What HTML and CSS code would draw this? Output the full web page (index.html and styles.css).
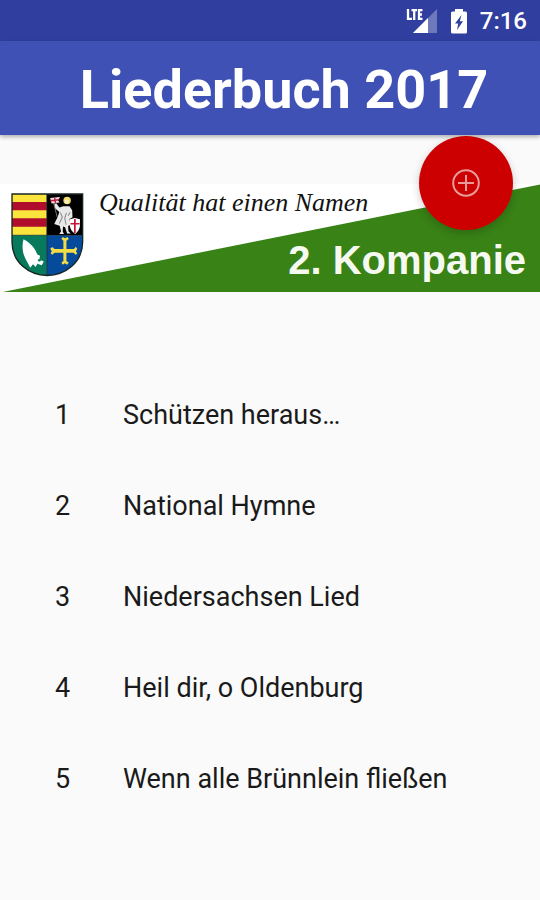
FILE: index.html
```html
<!DOCTYPE html>
<html lang="de">
    <head>
        <meta charset="utf-8">
        <title>Liederbuch 2017</title>
        <meta name="viewport" content="width=device-width, initial-scale=1.0">
        <link rel="stylesheet" href="styles.css">
    </head>
    <body>
        <div class="statusbar">
            <svg class="signal" viewBox="0 0 32 26" role="img" aria-label="LTE">
                <path d="M31 1V25H7z" fill="#fff" fill-opacity=".3"/>
                <path d="M22 10V25H7z" fill="#fff"/>
                <path d="M0 0H17V12.500H0z" fill="#303f9f"/>
                <path d="M2 1V10.800H6M5.500 2.200H11M8.200 2V12M16.500 2.200H13V10.800H16.500M13 6.500H16" fill="none" stroke="#fff" stroke-width="2.300"/>
            </svg>
            <svg class="battery" viewBox="0 0 18 26" role="img" aria-label="Akku lädt">
                <path d="M5 1H13V3.500H15.500Q17 3.500 17 5V24Q17 25.500 15.500 25.500H2.500Q1 25.500 1 24V5Q1 3.500 2.500 3.500H5z" fill="#fff"/>
                <path d="M11.500 7L5 15.500H8.200L7 22L13 13.200H9.800z" fill="#303f9f"/>
            </svg>
            <time class="clock">7:16</time>
        </div>
        <header class="appbar">
            <h1>Liederbuch 2017</h1>
            <button class="fab" type="button" aria-label="Lied hinzufügen">
                <svg viewBox="0 0 28 28" aria-hidden="true">
                    <circle cx="14" cy="14" r="12.800"/>
                    <path d="M14 6V22M6 14H22"/>
                </svg>
            </button>
        </header>
        <main>
            <section class="banner">
                <svg class="crest" viewBox="35 40 216 248" role="img" aria-label="Wappen">
                    <defs>
                        <clipPath id="shield">
                            <path d="M38 43H247V185C247 245 196 284 142 284S38 245 38 185z"/>
                        </clipPath>
                    </defs>
                    <g clip-path="url(#shield)">
                        <path d="M37 42H141V165H37z" fill="#fbe53c"/>
                        <path d="M37 67H141V91H37zM37 115H141V140H37z" fill="#b00d2c"/>
                        <path d="M141 42H249V165H141z" fill="#000"/>
                        <path d="M37 165H141V288H37z" fill="#077a5c"/>
                        <path d="M141 165H249V288H141z" fill="#064a9c"/>
                        <!-- Ritter mit Fahne und Schild -->
                        <path d="M163 72L169 70L178 83L190 79H208L216 91L217 112L208 117L211 134L204 138L205 153L212 160H201L195 141L189 139L188 155L192 161H178L183 153L179 137L163 132L173 111L178 96L166 86z" fill="#e9e9ea"/>
                        <path d="M181 98L187 111L178 130M199 99L194 115L198 134M210 97L204 107" fill="none" stroke="#88888c" stroke-width="3"/>
                        <circle cx="201" cy="62" r="11" fill="#f0df67"/>
                        <circle cx="200" cy="65" r="6" fill="#f5e9d2"/>
                        <path d="M151 55L180 52L174 62L179 68L155 71z" fill="#f1dfe3"/>
                        <path d="M152 63L177 60M164 54L167 70" stroke="#c3153a" stroke-width="4"/>
                        <path d="M161 70L172 112" stroke="#aaa" stroke-width="2"/>
                        <path d="M209 118L224 114L239 118V137Q237 153 225 161Q211 153 209 138z" fill="#fff"/>
                        <path d="M224 117V158M211 131H238" stroke="#c91235" stroke-width="5"/>
                        <!-- Flügel -->
                        <path d="M72 177C67 195 68 216 79 237L92 261L100 251L108 259L113 249L126 254L132 243L119 237L121 226L113 222C105 201 91 187 72 177z" fill="#fff"/>
                        <circle cx="119" cy="239" r="4" fill="#077a5c"/>
                        <!-- Kreuz -->
                        <path d="M188 170L195 174L202 170L206 176L199 181V206H221L227 199L231 206L227 212L231 219L226 223L220 217H199V241L206 246L201 252L194 248L188 252L184 246L190 241V217H164L157 223L152 218L156 212L151 205L157 200L164 206H190V181L184 176z" fill="#f4dc45"/>
                    </g>
                    <path d="M141 43V284M38 165H247" stroke="#14231e" stroke-width="2"/>
                    <path d="M38 43H247V185C247 245 196 284 142 284S38 245 38 185z" fill="none" stroke="#182421" stroke-width="4"/>
                </svg>
                <p class="slogan">Qualität hat einen Namen</p>
                <h2>2. Kompanie</h2>
            </section>
            <ul class="songs">
                <li><a href="#lied1"><span class="number">1</span><span>Schützen heraus…</span></a></li>
                <li><a href="#lied2"><span class="number">2</span><span>National Hymne</span></a></li>
                <li><a href="#lied3"><span class="number">3</span><span>Niedersachsen Lied</span></a></li>
                <li><a href="#lied4"><span class="number">4</span><span>Heil dir, o Oldenburg</span></a></li>
                <li><a href="#lied5"><span class="number">5</span><span>Wenn alle Brünnlein fließen</span></a></li>
            </ul>
        </main>
    </body>
</html>
```
FILE: styles.css
```css
*, *::before, *::after {
    box-sizing: border-box;
}
body, h1, h2, p, ul {
    margin: 0;
}

:root {
    --primary-color: #3f51b5;
    --primary-dark: #303f9f;
    --accent-color: #cc0000;
    --banner-green: #388216;
    --text-color: #1a1a1a;
    --bg-color: #fafafa;
}

body {
    min-height: 100vh;
    font-family: Roboto, "Liberation Sans", sans-serif;
    color: var(--text-color);
    background-color: var(--bg-color);
}

/* Status bar */
.statusbar {
    display: flex;
    align-items: center;
    justify-content: flex-end;
    height: 41px;
    padding-right: 13px;
    color: #fff;
    background-color: var(--primary-dark);
}

.signal {
    width: 32px;
    height: 26px;
    margin-right: 12px;
}

.battery {
    width: 18px;
    height: 26px;
    margin-right: 12px;
}

.clock {
    font-size: 24px;
    font-weight: 500;
    line-height: 28px;
}

/* App bar */
.appbar {
    position: relative;
    padding: 17px 0 13px 28px;
    color: #fff;
    text-align: center;
    background-color: var(--primary-color);
    box-shadow: 0 2px 4px rgba(0,0,0,0.3);
}

.appbar h1 {
    font-size: 54px;
    font-weight: 700;
    line-height: 64px;
}

.fab {
    position: absolute;
    top: 100%;
    right: 27px;
    display: grid;
    place-items: center;
    width: 94px;
    height: 94px;
    margin-top: 1px;
    padding: 0;
    border: none;
    border-radius: 50%;
    background-color: var(--accent-color);
    box-shadow: 0 3px 8px rgba(0,0,0,0.2);
    cursor: pointer;
}

.fab svg {
    width: 28px;
    height: 28px;
    fill: none;
    stroke: #e89c9c;
    stroke-width: 2;
}

/* Banner */
.banner {
    display: grid;
    grid-template-columns: 72px 1fr;
    column-gap: 16px;
    align-content: start;
    aspect-ratio: 5 / 1;
    margin-top: 49px;
    padding: 3px 14px 0 11px;
    background: linear-gradient(to bottom right, #fff 50%, var(--banner-green) calc(50% + 1px));
}

.crest {
    grid-row: 1 / 3;
    width: 73px;
    margin-top: 6px;
}

.slogan {
    color: #111;
    font-family: "Monotype Corsiva", "Liberation Serif", serif;
    font-size: 26px;
    font-style: italic;
    line-height: 32px;
}

.banner h2 {
    padding-top: 17px;
    color: #f6f9f0;
    font-family: "Liberation Sans", Arial, sans-serif;
    font-size: 40px;
    line-height: 48px;
    text-align: right;
}

/* Song list */
.songs {
    padding: 77px 0 0;
    list-style: none;
}

.songs a {
    display: flex;
    align-items: center;
    height: 91px;
    padding: 0 55px;
    color: inherit;
    font-size: 27px;
    line-height: 32px;
    text-decoration: none;
}

.number {
    width: 68px;
}
```
